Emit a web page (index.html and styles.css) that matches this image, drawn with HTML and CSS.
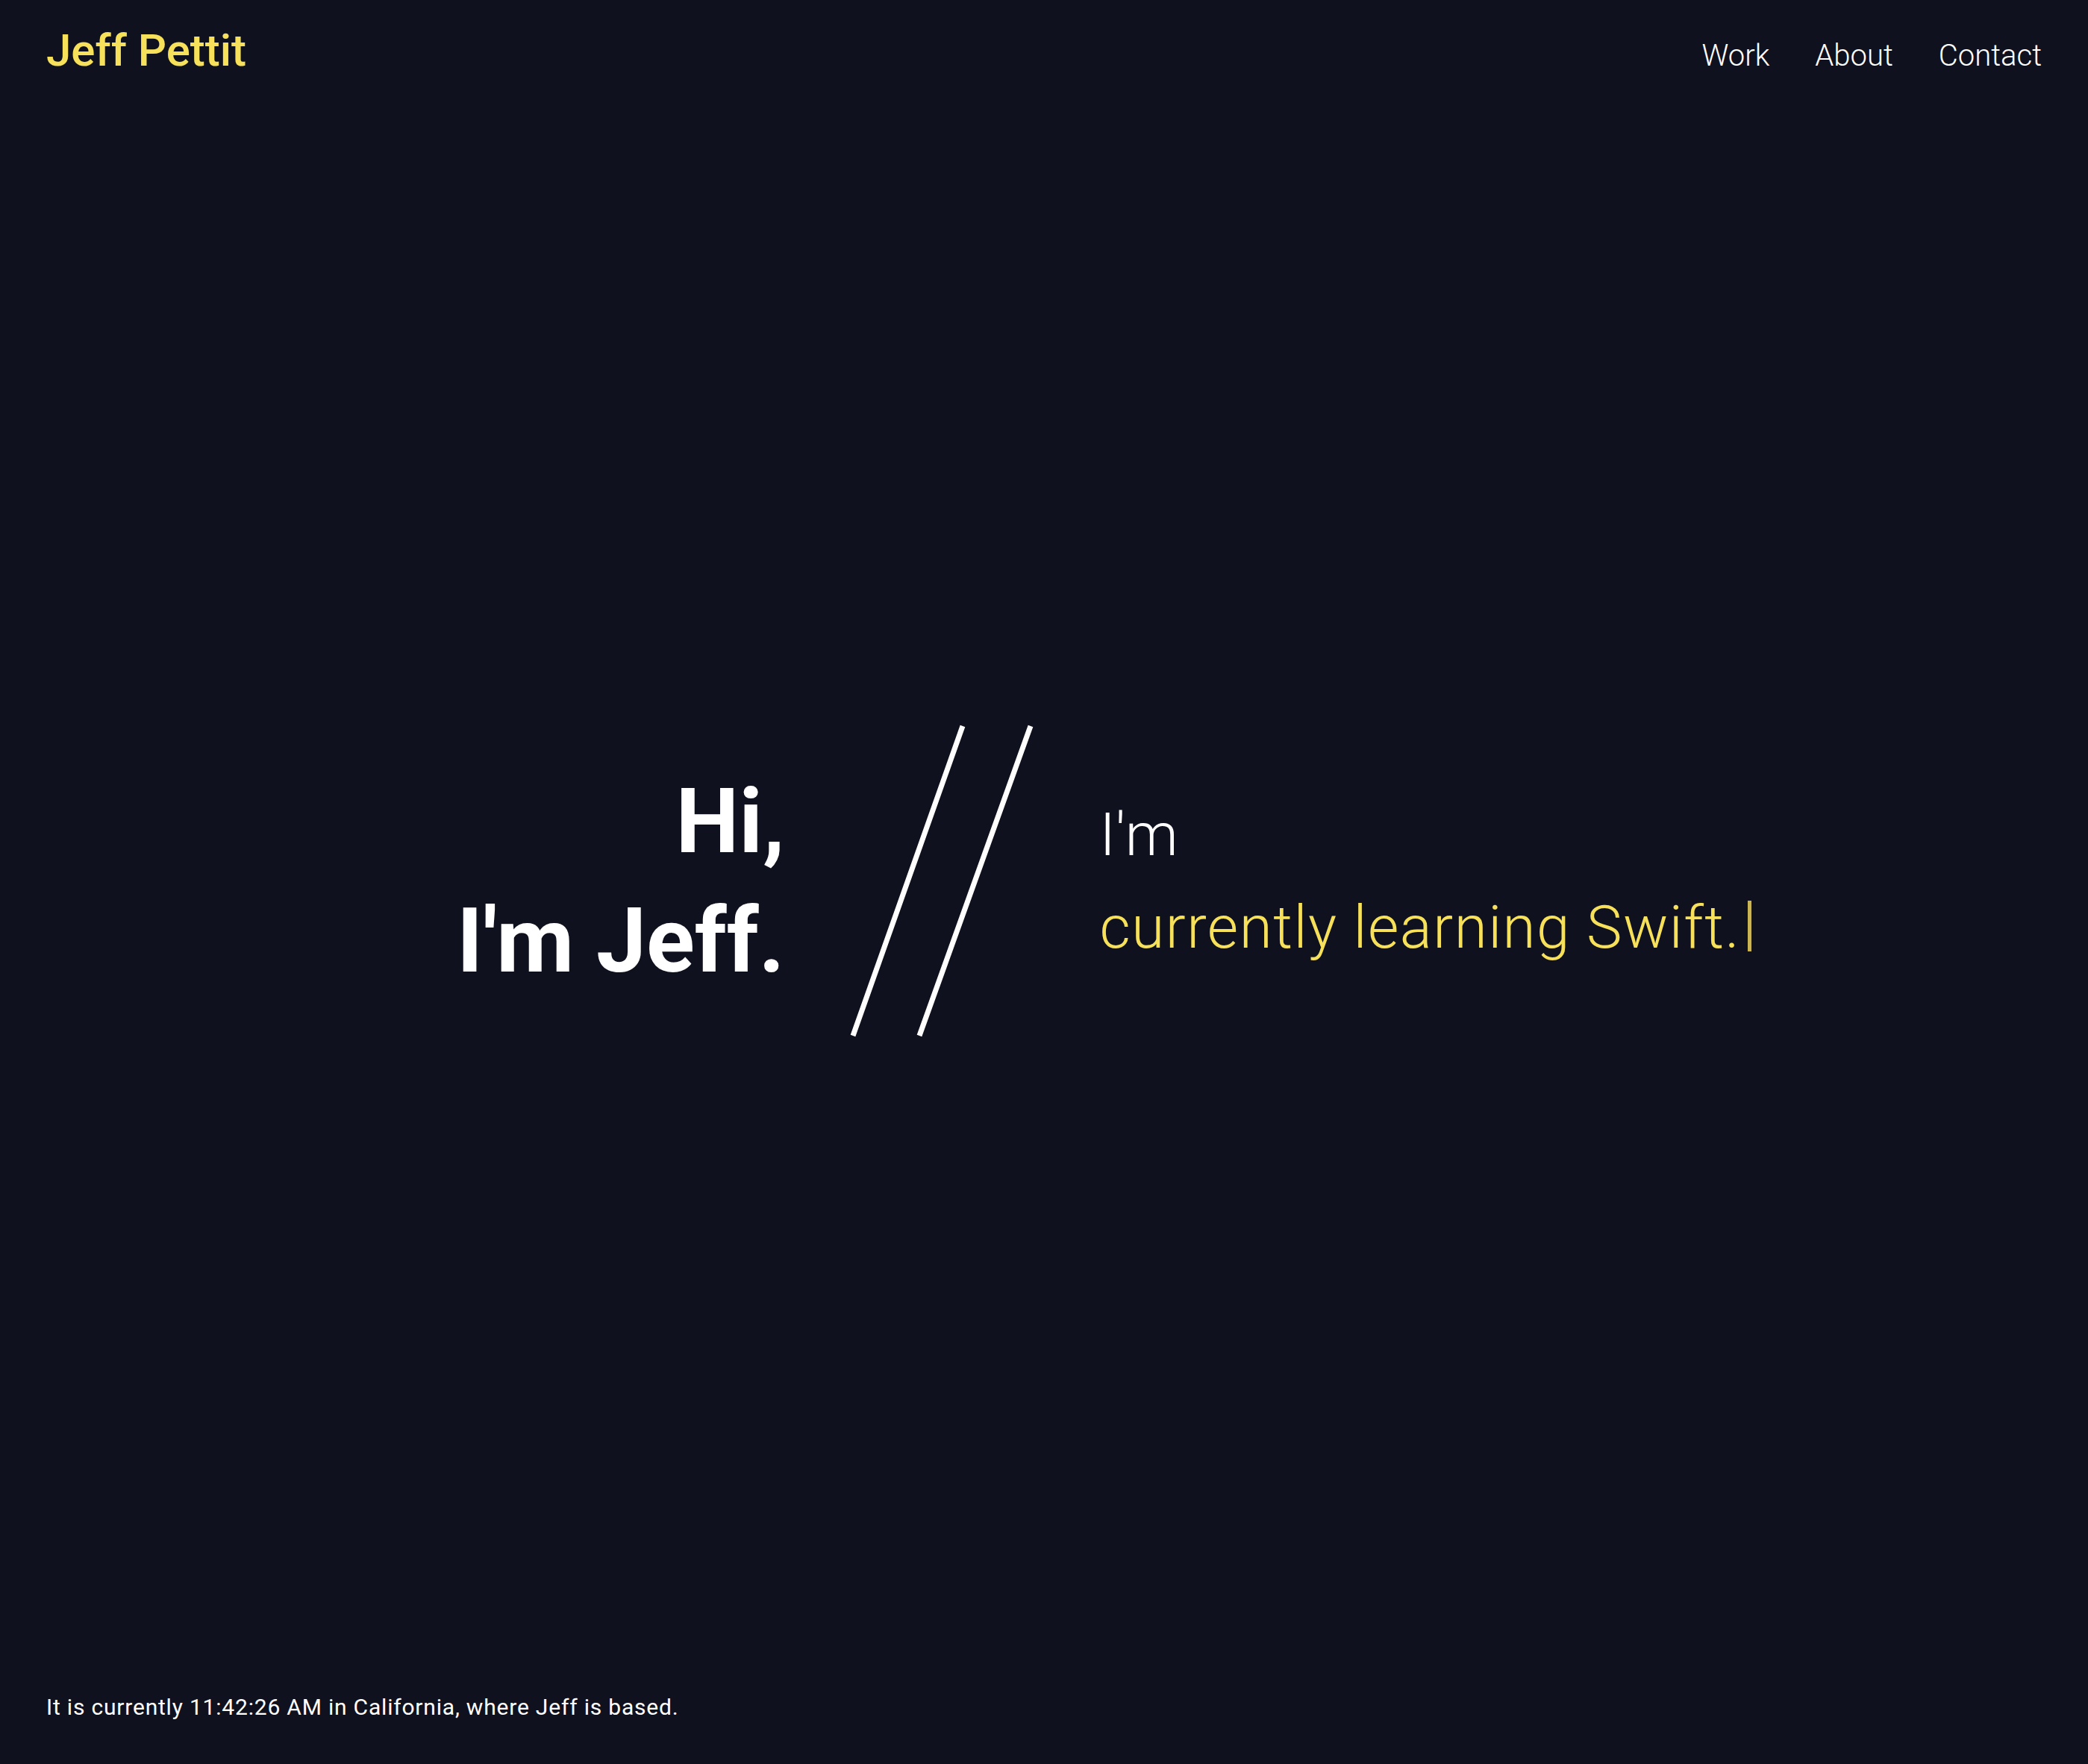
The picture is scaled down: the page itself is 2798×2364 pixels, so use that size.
FILE: index.html
```html
<!DOCTYPE html>
<html lang="en">
<head>
<meta charset="utf-8">
<title>Jeff Pettit</title>
<link rel="stylesheet" href="styles.css">
</head>
<body>
<div class="page">
  <header class="header">
    <a class="logo" href="#">Jeff Pettit</a>
    <nav class="nav">
      <a href="#">Work</a>
      <a href="#">About</a>
      <a href="#">Contact</a>
    </nav>
  </header>
  <main class="hero">
    <div class="hero-row">
      <h1 class="greeting">Hi,<br>I'm Jeff.</h1>
      <svg class="slashes" width="246" height="415" viewBox="0 0 246 415" aria-hidden="true">
        <line x1="151" y1="0" x2="4" y2="415" stroke="#ffffff" stroke-width="7"/>
        <line x1="242" y1="0" x2="93" y2="415" stroke="#ffffff" stroke-width="7"/>
      </svg>
      <div class="typed">
        <div class="typed-lead">I'm</div>
        <div class="typed-text">currently learning Swift.<span class="cursor"></span></div>
      </div>
    </div>
  </main>
  <footer class="footer">It is currently 11:42:26 AM in California, where Jeff is based.</footer>
</div>
</body>
</html>
```
FILE: styles.css
```css
html, body {
  margin: 0;
  padding: 0;
}
body {
  background: #0f111e;
  color: #ffffff;
  font-family: Roboto, "Liberation Sans", sans-serif;
}
.page {
  height: 100vh;
  display: flex;
  flex-direction: column;
}
.header {
  display: flex;
  justify-content: space-between;
  align-items: baseline;
  padding: 38px 62px 0;
}
.logo {
  color: #f7e15a;
  text-decoration: none;
  font-size: 60px;
  font-weight: 500;
  line-height: 1;
}
.nav {
  display: flex;
  gap: 61px;
}
.nav a {
  color: #ffffff;
  text-decoration: none;
  font-size: 40px;
  font-weight: 300;
  line-height: 1;
}
.hero {
  flex: 1;
  display: flex;
  align-items: center;
  justify-content: center;
  padding-bottom: 10px;
}
.hero-row {
  display: flex;
  align-items: center;
}
.greeting {
  width: 608px;
  margin: 0 87px 0 0;
  text-align: right;
  font-size: 120px;
  font-weight: 700;
  line-height: 160px;
}
.slashes {
  display: block;
  overflow: visible;
  margin-right: 89px;
}
.typed {
  width: 881px;
  font-size: 80px;
  font-weight: 300;
  line-height: 124px;
}
.typed-lead {
  color: #ffffff;
}
.typed-text {
  color: #f7e15a;
  white-space: nowrap;
  letter-spacing: 1.5px;
}
.cursor {
  display: inline-block;
  width: 5px;
  height: 68px;
  margin-left: 10px;
  vertical-align: -5px;
  background: #c9b553;
}
.footer {
  padding: 0 62px 61px;
  font-size: 30px;
  font-weight: 400;
  line-height: 1;
  letter-spacing: 0.8px;
}
```
